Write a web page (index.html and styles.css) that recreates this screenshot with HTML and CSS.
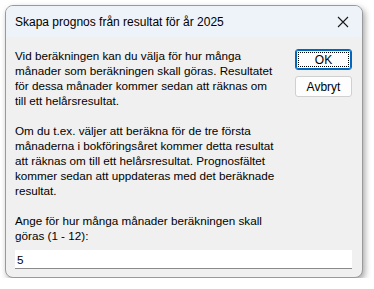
FILE: index.html
```html
<!DOCTYPE html>
<html>
<head>
<title>Skapa prognos</title>
<link rel="stylesheet" href="styles.css">
</head>
<body>
	<!-- dialog window -->
	<div class="dialog">
		<div class="titleBar">
			<span class="titleText">Skapa prognos från resultat för år 2025</span>
			<svg class="closeIcon" width="12" height="12" viewBox="0 0 12 12">
				<path d="M1 1 L11 11 M11 1 L1 11" stroke="#1a1a1a" stroke-width="1.1" fill="none"/>
			</svg>
		</div>

		<div class="dialogBody">
			<div class="textCol">
				<p>Vid beräkningen kan du välja för hur många månader som beräkningen skall göras. Resultatet för dessa månader kommer sedan att räknas om<br>till ett helårsresultat.</p>
				<p>Om du t.ex. väljer att beräkna för de tre första månaderna i bokföringsåret kommer detta resultat att räknas om till ett helårsresultat. Prognosfältet kommer sedan att uppdateras med det beräknade resultat.</p>
				<p class="askLabel">Ange för hur många månader beräkningen skall göras (1 - 12):</p>
			</div>
			<div class="buttonCol">
				<button class="btn btnDefault"><span class="focusRing">OK</span></button>
				<button class="btn">Avbryt</button>
			</div>
			<input class="monthField" type="text" value="5">
		</div>
	</div>
</body>
</html>
```

FILE: styles.css
```css
body {
	background-color: #fff;
	margin: 0;
	padding: 5px 0 0 5px;
	font-family: "Liberation Sans", Arial, sans-serif;
	font-size: 12px;
	color: #000;
}

.dialog {
	width: 356px;
	height: 271px;
	border: 1px solid #9a9a9a;
	border-radius: 8px;
	background-color: #f0f0f0;
	box-shadow: 2px 3px 6px rgba(0, 0, 0, 0.35);
	overflow: hidden;
	display: flex;
	flex-direction: column;
}

.titleBar {
	height: 31px;
	background-color: #eef3fa;
	display: flex;
	align-items: center;
	justify-content: space-between;
	padding: 0 9px 0 9px;
	flex-shrink: 0;
}
.titleText {
	font-size: 12px;
}
.closeIcon {
	display: block;
	margin-right: 4px;
}

.dialogBody {
	display: grid;
	grid-template-columns: 280px 57px;
	column-gap: 0;
	padding: 11px 10px 0 9px;
}

.textCol p {
	margin: 0 0 15px 0;
	font-size: 11.7px;
	line-height: 15px;
	width: 269px;
}
.textCol .askLabel {
	margin-bottom: 7px;
	width: 268px;
}

.buttonCol {
	display: flex;
	flex-direction: column;
	gap: 6px;
	padding-top: 1px;
}
.btn {
	height: 21px;
	width: 57px;
	padding: 0;
	border: 1px solid #d0d0d0;
	border-radius: 3px;
	background-color: #fdfdfd;
	font-family: "Liberation Sans", Arial, sans-serif;
	font-size: 12px;
	color: #000;
}
.btnDefault {
	border: 1px solid #0067c0;
	box-shadow: inset 0 0 0 1px #0067c0;
	padding: 2px;
}
.focusRing {
	display: flex;
	align-items: center;
	justify-content: center;
	height: 100%;
	border: 1px dotted #000;
	box-sizing: border-box;
}

.monthField {
	grid-column: 1 / 3;
	height: 19px;
	box-sizing: border-box;
	border: none;
	border-bottom: 1px solid #8a8a8a;
	background-color: #fff;
	padding: 0 0 0 2px;
	font-family: "Liberation Sans", Arial, sans-serif;
	font-size: 11.7px;
	color: #000;
}
```
